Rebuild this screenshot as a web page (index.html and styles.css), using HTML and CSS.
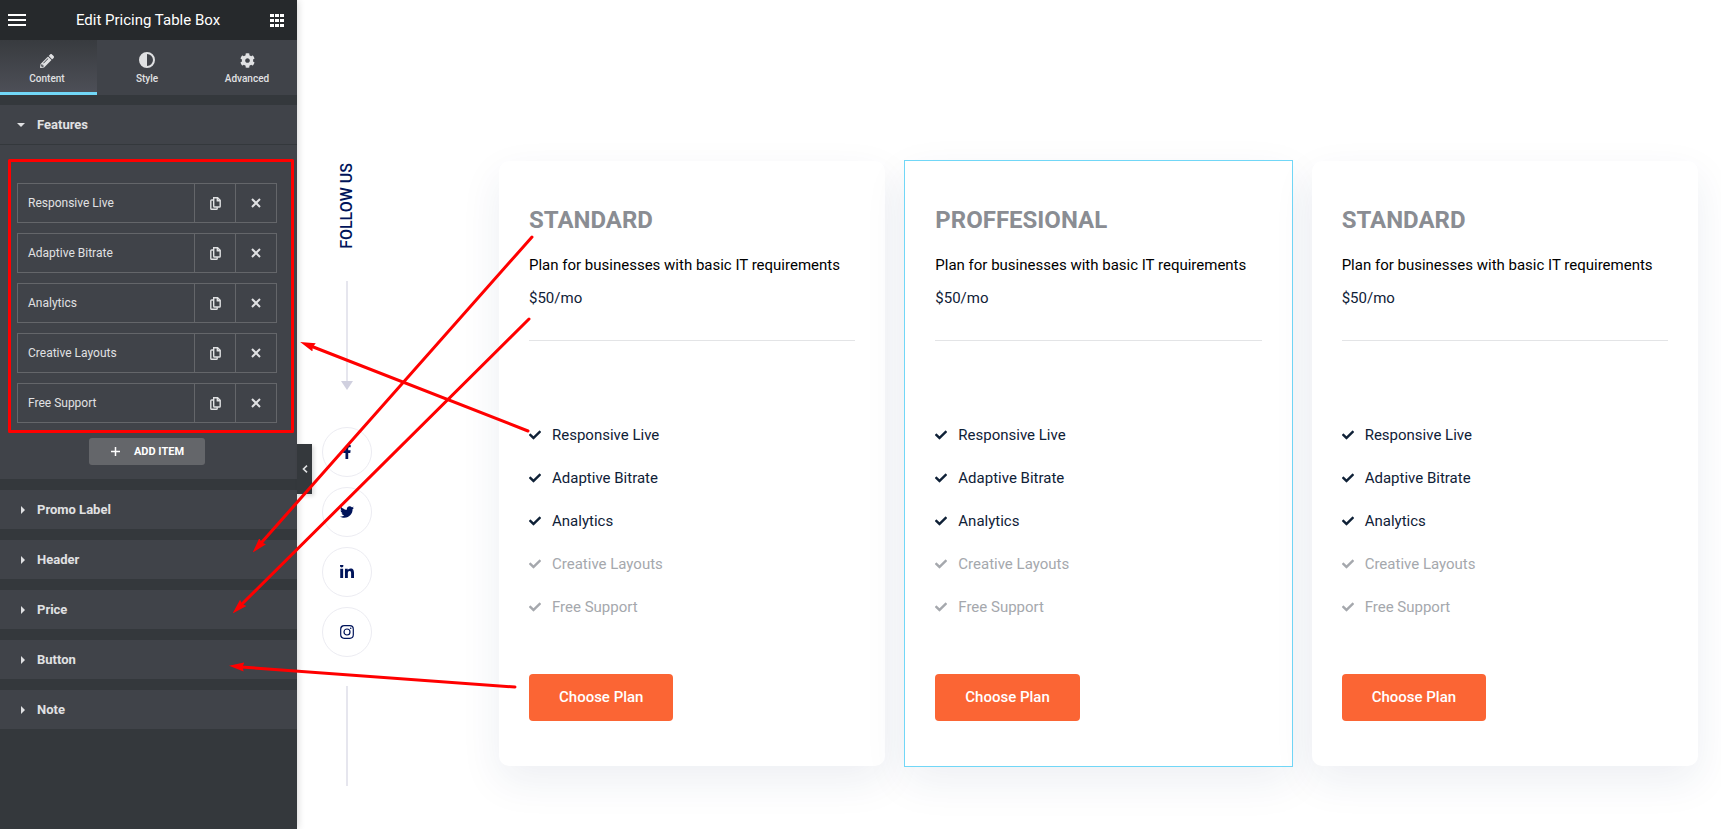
FILE: index.html
```html
<!DOCTYPE html>
<html lang="en">
<head>
<meta charset="utf-8">
<title>Edit Pricing Table Box</title>
<link rel="stylesheet" href="styles.css">
</head>
<body>
<svg class="defs" aria-hidden="true">
  <symbol id="check" viewBox="0 0 512 512"><path d="M173.898 439.404l-166.4-166.4c-9.997-9.997-9.997-26.206 0-36.204l36.203-36.204c9.997-9.998 26.207-9.998 36.204 0L192 312.69 432.095 72.596c9.997-9.997 26.207-9.997 36.204 0l36.203 36.204c9.997 9.997 9.997 26.206 0 36.204l-294.4 294.401c-9.998 9.997-26.207 9.997-36.204-.001z"/></symbol>
  <symbol id="copy" viewBox="0 0 11 13"><path d="M3.7 .8H7.6L10.2 3.4V9.2a.8.8 0 0 1-.8.8H4.5a.8.8 0 0 1-.8-.8zM7.3 .9V3.7H10.1M3.5 3H1.6a.8.8 0 0 0-.8.8V11.4a.8.8 0 0 0 .8.8H6.4a.8.8 0 0 0 .8-.8V10.2" fill="none" stroke="currentColor" stroke-width="1.4"/></symbol>
  <symbol id="close" viewBox="0 0 10 10"><path d="M1 1L9 9M9 1L1 9" fill="none" stroke="currentColor" stroke-width="2"/></symbol>
</svg>
<div class="app">
  <aside class="panel">
    <header class="panel-header">
      <button class="icon-button" aria-label="Menu"><svg width="18" height="12" viewBox="0 0 18 12"><path d="M0 1h18M0 6h18M0 11h18" stroke="currentColor" stroke-width="2"/></svg></button>
      <h1>Edit Pricing Table Box</h1>
      <button class="icon-button" aria-label="Widgets"><svg width="14" height="13" viewBox="0 0 14 13"><path d="M0 0h4v3H0zM5 0h4v3H5zM10 0h4v3h-4zM0 5h4v3H0zM5 5h4v3H5zM10 5h4v3h-4zM0 10h4v3H0zM5 10h4v3H5zM10 10h4v3h-4z"/></svg></button>
    </header>
    <nav class="tabs">
      <button class="tab active"><svg width="14" height="14" viewBox="0 0 512 512"><path d="M497.900 142.100l-46.100 46.100c-4.700 4.700-12.300 4.700-17 0l-111-111c-4.700-4.700-4.700-12.300 0-17l46.100-46.100c18.700-18.700 49.100-18.700 67.900 0l60.100 60.100c18.800 18.700 18.800 49.100 0 67.900zM284.200 99.800L21.600 362.400.4 483.900c-2.900 16.400 11.400 30.600 27.800 27.800l121.500-21.300 262.600-262.600c4.700-4.700 4.700-12.300 0-17l-111-111c-4.800-4.700-12.400-4.700-17.100 0zM124.100 339.900c-5.500-5.500-5.500-14.300 0-19.800l154-154c5.500-5.500 14.300-5.500 19.800 0s5.500 14.300 0 19.800l-154 154c-5.500 5.500-14.300 5.500-19.800 0zM88 424h48v36.300l-64.500 11.300-31.100-31.100L51.700 376H88v48z"/></svg><span>Content</span></button>
      <button class="tab"><svg width="16" height="16" viewBox="0 0 16 16"><path fill-rule="evenodd" d="M8 0a8 8 0 1 0 0 16A8 8 0 0 0 8 0zm0 2v12A6 6 0 0 1 8 2z" transform="rotate(180 8 8)"/></svg><span>Style</span></button>
      <button class="tab"><svg width="15" height="15" viewBox="0 0 512 512"><path d="M487.400 315.700l-42.600-24.600c4.300-23.200 4.300-47 0-70.200l42.600-24.600c4.900-2.800 7.100-8.600 5.500-14-11.100-35.600-30-67.800-54.700-94.600-3.800-4.100-10-5.100-14.800-2.300L380.800 110c-17.900-15.400-38.500-27.300-60.800-35.100V25.800c0-5.600-3.900-10.500-9.400-11.700-36.700-8.200-74.300-7.800-109.200 0-5.500 1.200-9.400 6.100-9.400 11.700V75c-22.200 7.900-42.800 19.800-60.800 35.100L88.700 85.500c-4.900-2.800-11-1.900-14.800 2.300-24.700 26.700-43.600 58.900-54.700 94.600-1.700 5.400.6 11.200 5.500 14L67.300 221c-4.300 23.200-4.300 47 0 70.200l-42.600 24.600c-4.900 2.800-7.100 8.600-5.500 14 11.100 35.600 30 67.800 54.700 94.600 3.800 4.100 10 5.100 14.800 2.300l42.600-24.600c17.900 15.400 38.500 27.300 60.800 35.100v49.200c0 5.600 3.900 10.500 9.400 11.700 36.700 8.200 74.300 7.800 109.200 0 5.500-1.200 9.400-6.100 9.400-11.700v-49.200c22.200-7.900 42.800-19.800 60.800-35.100l42.600 24.600c4.900 2.800 11 1.900 14.800-2.300 24.700-26.700 43.600-58.900 54.700-94.600 1.500-5.500-.7-11.300-5.600-14.100zM256 336c-44.100 0-80-35.900-80-80s35.900-80 80-80 80 35.900 80 80-35.900 80-80 80z"/></svg><span>Advanced</span></button>
    </nav>
    <div class="sections">
      <section class="open-section">
        <button class="section-title open"><svg width="8" height="4" viewBox="0 0 8 4"><path d="M0 0h8L4 4z"/></svg>Features</button>
        <div class="section-body">
          <ul class="repeater">
            <li><button class="item-name">Responsive Live</button><button class="item-tool" aria-label="Duplicate"><svg width="11" height="13"><use href="#copy"/></svg></button><button class="item-tool" aria-label="Remove"><svg width="10" height="10"><use href="#close"/></svg></button></li>
            <li><button class="item-name">Adaptive Bitrate</button><button class="item-tool" aria-label="Duplicate"><svg width="11" height="13"><use href="#copy"/></svg></button><button class="item-tool" aria-label="Remove"><svg width="10" height="10"><use href="#close"/></svg></button></li>
            <li><button class="item-name">Analytics</button><button class="item-tool" aria-label="Duplicate"><svg width="11" height="13"><use href="#copy"/></svg></button><button class="item-tool" aria-label="Remove"><svg width="10" height="10"><use href="#close"/></svg></button></li>
            <li><button class="item-name">Creative Layouts</button><button class="item-tool" aria-label="Duplicate"><svg width="11" height="13"><use href="#copy"/></svg></button><button class="item-tool" aria-label="Remove"><svg width="10" height="10"><use href="#close"/></svg></button></li>
            <li><button class="item-name">Free Support</button><button class="item-tool" aria-label="Duplicate"><svg width="11" height="13"><use href="#copy"/></svg></button><button class="item-tool" aria-label="Remove"><svg width="10" height="10"><use href="#close"/></svg></button></li>
          </ul>
          <button class="add-item"><svg width="9" height="9" viewBox="0 0 9 9"><path d="M0 4.500h9M4.500 0v9" stroke="currentColor" stroke-width="1.500"/></svg>ADD ITEM</button>
        </div>
      </section>
      <button class="section-title"><svg width="4" height="8" viewBox="0 0 4 8"><path d="M0 0v8l4-4z"/></svg>Promo Label</button>
      <button class="section-title"><svg width="4" height="8" viewBox="0 0 4 8"><path d="M0 0v8l4-4z"/></svg>Header</button>
      <button class="section-title"><svg width="4" height="8" viewBox="0 0 4 8"><path d="M0 0v8l4-4z"/></svg>Price</button>
      <button class="section-title"><svg width="4" height="8" viewBox="0 0 4 8"><path d="M0 0v8l4-4z"/></svg>Button</button>
      <button class="section-title"><svg width="4" height="8" viewBox="0 0 4 8"><path d="M0 0v8l4-4z"/></svg>Note</button>
    </div>
    <button class="collapse" aria-label="Collapse panel"><svg width="6" height="8" viewBox="0 0 6 8"><path d="M5 .7L1.500 4L5 7.300" fill="none" stroke="currentColor" stroke-width="1.600"/></svg></button>
  </aside>

  <main class="preview">
    <div class="social">
      <span class="follow">FOLLOW US</span>
      <div class="line-arrow"><i class="line"></i><svg width="12" height="9" viewBox="0 0 12 9"><path d="M0 0h12L6 9z"/></svg></div>
      <div class="circles">
        <a href="#" aria-label="Facebook"><svg width="14" height="14" viewBox="-96 0 512 512"><path d="M279.140 288l14.220-92.660h-88.910v-60.130c0-25.350 12.420-50.060 52.240-50.060h40.420V6.260S260.430 0 225.360 0c-73.220 0-121.080 44.380-121.080 124.720v70.620H22.890V288h81.390v224h100.170V288z"/></svg></a>
        <a href="#" aria-label="Twitter"><svg width="14" height="14" viewBox="0 0 512 512"><path d="M459.370 151.716c.325 4.548.325 9.097.325 13.645 0 138.720-105.583 298.558-298.558 298.558-59.452 0-114.680-17.219-161.137-47.106 8.447.974 16.568 1.299 25.340 1.299 49.055 0 94.213-16.568 130.274-44.832-46.132-.975-84.792-31.188-98.112-72.772 6.498.974 12.995 1.624 19.818 1.624 9.421 0 18.843-1.300 27.614-3.573-48.081-9.747-84.143-51.980-84.143-102.985v-1.299c13.969 7.797 30.214 12.670 47.431 13.319-28.264-18.843-46.781-51.005-46.781-87.391 0-19.492 5.197-37.360 14.294-52.954 51.655 63.675 129.300 105.258 216.365 109.807-1.624-7.797-2.599-15.918-2.599-24.040 0-57.828 46.782-104.934 104.934-104.934 30.213 0 57.502 12.670 76.670 33.137 23.715-4.548 46.456-13.320 66.599-25.340-7.798 24.366-24.366 44.833-46.132 57.827 21.117-2.273 41.584-8.122 60.426-16.243-14.292 20.791-32.161 39.308-52.628 54.253z"/></svg></a>
        <a href="#" aria-label="LinkedIn"><svg width="14" height="14" viewBox="0 0 448 448"><path d="M100.280 416H7.400V116.900h92.880zM53.790 76.100C24.090 76.100 0 51.500 0 21.800a53.790 53.790 0 0 1 107.580 0c0 29.700-24.100 54.300-53.790 54.300zM447.900 416h-92.680V270.400c0-34.700-.7-79.200-48.290-79.200-48.290 0-55.690 37.700-55.690 76.700V416h-92.780V116.900h89.080v40.800h1.300c12.400-23.500 42.690-48.300 87.880-48.300 94 0 111.280 61.900 111.280 142.300V416z"/></svg></a>
        <a href="#" aria-label="Instagram"><svg width="14" height="14" viewBox="0 0 14 14"><g fill="none" stroke="currentColor" stroke-width="1.200"><rect x=".7" y=".7" width="12.600" height="12.600" rx="3.500"/><circle cx="7" cy="7" r="3"/></g><circle cx="10.700" cy="3.300" r=".8"/></svg></a>
      </div>
      <i class="line"></i>
    </div>

    <div class="plans">
      <article class="plan">
        <h2>STANDARD</h2>
        <p class="desc">Plan for businesses with basic IT requirements</p>
        <p class="price">$50/mo</p>
        <ul class="features">
          <li><svg><use href="#check"/></svg>Responsive Live</li>
          <li><svg><use href="#check"/></svg>Adaptive Bitrate</li>
          <li><svg><use href="#check"/></svg>Analytics</li>
          <li class="off"><svg><use href="#check"/></svg>Creative Layouts</li>
          <li class="off"><svg><use href="#check"/></svg>Free Support</li>
        </ul>
        <a class="choose" href="#">Choose Plan</a>
      </article>
      <article class="plan selected">
        <h2>PROFFESIONAL</h2>
        <p class="desc">Plan for businesses with basic IT requirements</p>
        <p class="price">$50/mo</p>
        <ul class="features">
          <li><svg><use href="#check"/></svg>Responsive Live</li>
          <li><svg><use href="#check"/></svg>Adaptive Bitrate</li>
          <li><svg><use href="#check"/></svg>Analytics</li>
          <li class="off"><svg><use href="#check"/></svg>Creative Layouts</li>
          <li class="off"><svg><use href="#check"/></svg>Free Support</li>
        </ul>
        <a class="choose" href="#">Choose Plan</a>
      </article>
      <article class="plan">
        <h2>STANDARD</h2>
        <p class="desc">Plan for businesses with basic IT requirements</p>
        <p class="price">$50/mo</p>
        <ul class="features">
          <li><svg><use href="#check"/></svg>Responsive Live</li>
          <li><svg><use href="#check"/></svg>Adaptive Bitrate</li>
          <li><svg><use href="#check"/></svg>Analytics</li>
          <li class="off"><svg><use href="#check"/></svg>Creative Layouts</li>
          <li class="off"><svg><use href="#check"/></svg>Free Support</li>
        </ul>
        <a class="choose" href="#">Choose Plan</a>
      </article>
    </div>
  </main>

  <svg class="annotations" width="560" height="720" viewBox="0 0 560 720" aria-hidden="true">
    <defs><marker id="head" markerUnits="userSpaceOnUse" markerWidth="15" markerHeight="10" refX="13" refY="5" orient="auto"><path d="M0 .5L15 5L0 9.500L1.500 5z" fill="#f00"/></marker></defs>
    <g fill="none" stroke="#f00" stroke-width="3" stroke-linecap="round">
      <rect x="9.500" y="160.500" width="283" height="271" stroke-linejoin="round"/>
      <path d="M528 431L312 346.500"/>
      <path d="M532 237L262 542"/>
      <path d="M529 319L242 604"/>
      <path d="M515 687L241 667"/>
    </g>
    <g fill="none" stroke="none">
      <path d="M528 431L302 342.700" marker-end="url(#head)"/>
      <path d="M532 237L254 551" marker-end="url(#head)"/>
      <path d="M529 319L234 612" marker-end="url(#head)"/>
      <path d="M515 687L231 666" marker-end="url(#head)"/>
    </g>
  </svg>
</div>
</body>
</html>
```
FILE: styles.css
```css
* { box-sizing: border-box; }

body {
  margin: 0;
  background: #fff;
  color: #0f2137;
  font-family: Roboto, "Liberation Sans", sans-serif;
  font-size: 15px;
}

button {
  border: 0;
  padding: 0;
  background: none;
  color: inherit;
  font: inherit;
  cursor: pointer;
}

h1, h2, p, ul { margin: 0; padding: 0; }
ul { list-style: none; }
svg { display: block; flex: none; fill: currentColor; }
.defs { position: absolute; width: 0; height: 0; }

.app {
  position: relative;
  display: flex;
  min-height: 100vh;
}

/* Editor panel */
.panel {
  position: relative;
  flex: none;
  width: 297px;
  background: #34383c;
  color: #e0e1e3;
  box-shadow: 0 0 8px rgba(0, 0, 0, .2);
}

.panel-header {
  display: flex;
  align-items: center;
  justify-content: space-between;
  height: 40px;
  padding: 0 13px 0 8px;
  background: #26292c;
  color: #fff;
}

.panel-header h1 { font-size: 15px; font-weight: 400; }

.tabs {
  display: grid;
  grid-template-columns: 97px 1fr 1fr;
  height: 55px;
  background: #404349;
}

.tab {
  display: flex;
  flex-direction: column;
  align-items: center;
  justify-content: flex-end;
  gap: 4px;
  padding-bottom: 7px;
  border-bottom: 3px solid transparent;
  font-size: 10px;
  line-height: 12px;
  font-weight: 500;
}

.tab svg { margin-bottom: 1px; }

.tab.active {
  padding-right: 3px;
  border-bottom-color: #71d7f7;
  background: linear-gradient(#383b3f, #4d4f57) padding-box;
}

.sections {
  display: flex;
  flex-direction: column;
  gap: 11px;
  padding-top: 10px;
}

.section-title {
  display: flex;
  align-items: center;
  gap: 12px;
  width: 100%;
  height: 39px;
  padding-left: 21px;
  background: #404349;
  font-size: 13px;
  font-weight: 700;
  text-align: left;
}

.section-title.open { padding-left: 17px; height: 40px; border-bottom: 1px solid #34383c; }

.open-section { background: #404349; }

.section-body {
  display: flex;
  flex-direction: column;
  align-items: center;
  gap: 15px;
  padding: 38px 20px 14px 17px;
}

.repeater {
  display: grid;
  gap: 10px;
  width: 100%;
}

.repeater li {
  display: grid;
  grid-template-columns: 1fr 41px 41px;
  height: 40px;
  border: 1px solid #64666a;
}

.item-name {
  padding-left: 10px;
  font-size: 12px;
  text-align: left;
}

.item-tool {
  display: flex;
  align-items: center;
  justify-content: center;
  border-left: 1px solid #64666a;
}

.add-item {
  display: flex;
  align-items: center;
  gap: 14px;
  height: 27px;
  padding: 0 21px 0 22px;
  border-radius: 3px;
  background: #64666a;
  color: #fff;
  font-size: 11px;
  font-weight: 700;
}

.collapse {
  position: absolute;
  top: 444px;
  left: 100%;
  display: flex;
  align-items: center;
  justify-content: center;
  width: 15px;
  height: 50px;
  background: #34383c;
  box-shadow: 2px 2px 4px rgba(0, 0, 0, .15);
}

/* Page preview */
.preview {
  display: flex;
  flex: 1;
  align-items: flex-start;
  gap: 127px;
  min-width: 0;
  padding: 161px 23px 40px 25px;
}

.social {
  display: flex;
  flex: none;
  flex-direction: column;
  align-items: center;
  width: 50px;
  padding-top: 2px;
  color: #00145a;
}

.follow {
  margin-bottom: 32px;
  font-size: 16px;
  font-weight: 500;
  line-height: 20px;
  writing-mode: vertical-rl;
  transform: rotate(180deg);
}

.line {
  display: block;
  width: 2px;
  height: 100px;
  background: #e6e6ee;
}

.line-arrow {
  display: flex;
  flex-direction: column;
  align-items: center;
  margin-bottom: 37px;
  color: #d0d0df;
}

.circles {
  display: grid;
  gap: 10px;
  margin-bottom: 29px;
}

.circles a {
  display: flex;
  align-items: center;
  justify-content: center;
  width: 50px;
  height: 50px;
  border: 1px solid #ececf2;
  border-radius: 50%;
  color: inherit;
}

.plans {
  display: grid;
  flex: 1;
  grid-template-columns: repeat(3, minmax(0, 1fr));
  gap: 20px;
}

.plan {
  padding: 44px 30px 45px;
  border-radius: 10px;
  background: #fff;
  box-shadow: 0 15px 40px rgba(30, 50, 100, .08);
}

.plan.selected {
  border-radius: 0;
  outline: 1px solid #71d7f7;
}

.plan h2 {
  color: #8a8d93;
  font-size: 24px;
  font-weight: 700;
  line-height: 30px;
}

.desc {
  margin-top: 15px;
  color: #000;
  line-height: 30px;
}

.price {
  padding: 3px 0 27px;
  border-bottom: 1px solid #e3e4e6;
  line-height: 30px;
}

.features { padding: 72px 0 46px; }

.features li {
  display: flex;
  align-items: center;
  gap: 11px;
  height: 43px;
}

.features svg { width: 12px; height: 12px; }
.features .off { color: #a5a8ad; }

.choose {
  display: inline-block;
  padding: 0 30px;
  border-radius: 4px;
  background: #fb6534;
  color: #fff;
  font-weight: 500;
  line-height: 47px;
  text-decoration: none;
}

.annotations {
  position: absolute;
  top: 0;
  left: 0;
  pointer-events: none;
}
```
